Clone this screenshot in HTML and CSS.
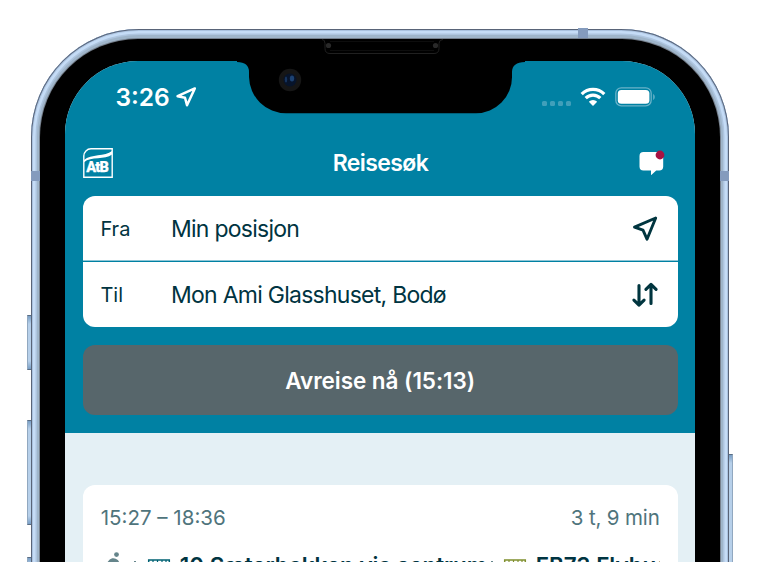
FILE: index.html
```html
<!DOCTYPE html>
<html lang="no">
<head>
<meta charset="utf-8">
<title>Reisesøk</title>
<link rel="stylesheet" href="styles.css">
</head>
<body>
<div class="stage">
  <i class="button mute"></i><i class="button vol-up"></i><i class="button vol-down"></i><i class="button power"></i>
  <div class="phone">
    <i class="band band-top"></i><i class="band band-left"></i><i class="band band-right"></i>
    <div class="bezel">
      <div class="screen">
        <div class="top">
          <div class="status">
            <div class="clock"><span>3:26</span>
              <svg width="21" height="21" viewBox="0 0 21 21"><path d="M18.8 1.4 1.6 9.200l7.400 1.500 2 7.600z" fill="none" stroke="#fff" stroke-width="2.500" stroke-linejoin="round"/></svg>
            </div>
            <div class="signals">
              <span class="dots"><i></i><i></i><i></i><i></i></span>
              <svg class="wifi" width="26" height="20" viewBox="0 0 26 20"><g fill="none" stroke="#fff" stroke-width="3.200"><path d="M1.700 7.100a16 16 0 0 1 22.600 0"/><path d="M5.700 11.200a10.300 10.300 0 0 1 14.600 0"/></g><path d="M13 19 8.800 14.700a6 6 0 0 1 8.400 0z" fill="#fff"/></svg>
              <svg class="battery" width="41" height="20" viewBox="0 0 41 20"><rect x=".8" y=".8" width="35.4" height="18" rx="5.5" fill="none" stroke="#69b3c9" stroke-width="1.3"/><rect x="2.8" y="2.900" width="31.600" height="13.800" rx="3.500" fill="#fff"/><path d="M38.200 7c2 1 2 5 0 6z" fill="#69b3c9"/></svg>
            </div>
          </div>
          <header class="header">
            <div class="logo"><svg width="30" height="30" viewBox="0 0 30 30"><path d="M8 .8H29.200V29.200H.8V8A7.200 7.200 0 0 1 8 .8z" fill="none" stroke="#fff" stroke-width="1.400"/><path d="M1 12C8 5.500 22 9 29 3v3.600C22 12 8 8.500 1 14.200z" fill="#fff"/></svg><b>AtB</b></div>
            <h1>Reisesøk</h1>
            <svg class="chat" width="26" height="26" viewBox="0 0 26 26"><path d="M4.500 2h15.700a4 4 0 0 1 4 4v10.500a4 4 0 0 1-4 4h-3l-4.600 4.300c-.4.300-.6.200-.6-.3v-4H4.500a4 4 0 0 1-4-4V6a4 4 0 0 1 4-4z" fill="#fff"/><circle cx="21" cy="5" r="4.400" fill="#a71342"/></svg>
          </header>
          <div class="search">
            <div class="row"><label>Fra</label><span class="place from">Min posisjon</span>
              <svg width="28" height="28" viewBox="0 0 28 28"><path d="M24.700 3 3.500 12.200l8.500 3 4 9z" fill="none" stroke="#00353f" stroke-width="2.900" stroke-linejoin="round"/></svg></div>
            <div class="row"><label>Til</label><span class="place to">Mon Ami Glasshuset, Bodø</span>
              <svg width="28" height="28" viewBox="0 0 28 28"><path d="M8 4.500V24M2.900 19.200l5.100 5 5.100-5M20 22.500V3.500M14.900 8.400l5.100-5 5.100 5" fill="none" stroke="#00353f" stroke-width="3.100" stroke-linejoin="round" stroke-linecap="round"/></svg></div>
          </div>
          <button class="depart">Avreise nå (15:13)</button>
        </div>
        <main class="results">
          <article class="trip">
            <div class="times"><span class="range">15:27 – 18:36</span><span class="duration">3 t, 9 min</span></div>
            <div class="legs">
              <svg class="walk" width="20" height="26" viewBox="0 0 20 26"><circle cx="12.500" cy="2.600" r="2.400" fill="#65858b"/><path d="M5 16V11.500Q8.500 6 12.500 9.500l3 5M9 9.500v6l5 8M8 15l-3 9" fill="none" stroke="#65858b" stroke-width="4"/></svg>
              <i class="sep"></i>
              <svg class="bus" width="24" height="22" viewBox="0 0 24 22"><path d="M1.700 1h20.600v17H1.700z" fill="none" stroke="#006173" stroke-width="1.500"/><path d="M6 1v7M10.500 1v7M15 1v7M19 1v7M1 9h22" stroke="#006173" stroke-width="1.200"/></svg>
              <span class="line first">10 Sæterbakken via sentrum</span>
              <i class="sep late"></i>
              <svg class="bus" width="24" height="22" viewBox="0 0 24 22"><path d="M1.700 1h20.600v17H1.700z" fill="none" stroke="#80902f" stroke-width="1.500"/><path d="M6 1v7M10.500 1v7M15 1v7M19 1v7M1 9h22" stroke="#80902f" stroke-width="1.200"/></svg>
              <span class="line second">FB73 Flybuss</span>
            </div>
          </article>
        </main>
      </div>
      <svg class="notch" width="288" height="76" viewBox="0 0 288 76"><path d="M0 0H288V23Q275 23.300 275 33V38A36 36 0 0 1 239 74.200H49A37 37 0 0 1 12 38V33Q12 23 0 23z"/>
        <g fill="none" stroke="#202020"><path d="M85 .5q3 0 3 4v5q0 5 5 5h104q5 0 5-5v-5q0-4 4-4"/><path d="M93 2.500h104M93 11.500h104" stroke="#0d0d0d"/></g>
        <circle cx="91.500" cy="6.500" r="2.600" fill="#292929"/><circle cx="198.500" cy="6.500" r="2.600" fill="#292929"/>
        <circle cx="53" cy="41" r="11.200" fill="#161616"/><circle cx="53" cy="41" r="6.500" fill="#07142b"/><ellipse cx="55" cy="39.500" rx="2.200" ry="3" fill="#1d4272"/><ellipse cx="49" cy="40.500" rx="1.200" ry="3" fill="#17345d"/></svg>
    </div>
  </div>
</div>
</body>
</html>
```
FILE: styles.css
```css
* { box-sizing: border-box; }
body { margin: 0; background: #fff; font-family: Inter, "Liberation Sans", sans-serif; color: #003441; }
.stage { position: relative; width: 760px; height: 562px; overflow: hidden; padding: 29px 31px 0 31.400px; }
.phone {
  position: relative; height: 900px; padding: 9.500px 9px; border-radius: 108px;
  background: #9fb5ca;
  box-shadow: inset 0 0 0 1px #596478, inset 0 0 0 2px #aac2df, inset 0 0 0 4.500px #c5dcf6, inset 0 0 0 6px #aec5df;
}
.bezel { position: relative; height: 880px; padding: 22.500px 25px; background: #000; border-radius: 98px; box-shadow: 0 0 0 1px #77818e; }
.screen { height: 836px; border-radius: 73px; overflow: hidden; background: #e4f0f5; }
.notch { position: absolute; left: 196.300px; top: 0; }
.band { position: absolute; background: #849bbd; z-index: 1; }
.band-top { left: 546.600px; top: -1px; width: 10px; height: 10px; }
.band-left { left: 0; top: 142px; width: 9px; height: 10px; }
.band-right { right: 0; top: 142px; width: 9px; height: 10px; }
.button { position: absolute; border: 1px solid #5a6d83; border-left-color: #91a8c0; border-right-color: #91a8c0; background: linear-gradient(#789ec5, #b7d0ea 8px, #b7d0ea calc(100% - 8px), #789ec5); }
.mute { left: 27px; top: 315px; width: 7px; height: 55px; }
.vol-up { left: 27px; top: 420px; width: 7px; height: 105px; }
.vol-down { left: 27px; top: 557px; width: 7px; height: 105px; }
.power { left: 727px; top: 454px; width: 6px; height: 170px; }

.top { height: 372px; padding: 0 17.400px; background: #0081a3; }
.status { height: 72px; padding: 0 21.600px 0 32.600px; display: flex; align-items: center; justify-content: space-between; color: #fff; }
.clock { display: flex; align-items: center; gap: 6px; font-size: 24.500px; font-weight: 600; letter-spacing: 0; }
.signals { display: flex; align-items: center; }
.dots { display: flex; gap: 3px; margin: 12px 9px 0 0; }
.dots i { width: 5px; height: 5px; border-radius: 1.500px; background: #409fba; }
.wifi { margin-right: 9px; }
.header { height: 63px; display: flex; align-items: center; justify-content: space-between; padding: 0 12.600px 4px 0; }
.logo { position: relative; width: 30px; height: 30px; color: #fff; }
.logo svg { display: block; }
.logo b { position: absolute; left: 3.500px; bottom: 2px; font: 900 14.500px/16px Roboto, sans-serif; letter-spacing: -.7px; -webkit-text-stroke: .25px #fff; }
h1 { margin: 0 0 0 9px; color: #fff; font-size: 23px; line-height: 28px; font-weight: 600; letter-spacing: -.6px; }
.search { height: 131px; border-radius: 12px; background: #fff; display: flex; flex-direction: column; }
.row { flex: 1; display: flex; align-items: center; padding: 0 18.600px 0 17.600px; }
.row + .row { border-top: 1px solid #0081a3; box-shadow: 0 -1px #8fc6d6; }
.row label { width: 70.600px; font-size: 20px; }
.row svg { margin-left: auto; }
.place { font-size: 23px; letter-spacing: -.74px; }
.depart { display: block; width: 100%; height: 70px; margin-top: 18px; border: 0; border-radius: 12px; background: #57666b; color: #fff; font: 600 22.500px Inter, sans-serif; letter-spacing: -.05px; }
.results { padding: 52px 17.400px; }
.trip { height: 300px; border-radius: 12px; background: #fff; padding: 20px 18px; }
.times { display: flex; justify-content: space-between; font-size: 20.500px; line-height: 26px; color: #4f747c; }
.duration { letter-spacing: -.15px; }
.legs { height: 30px; margin-top: 20px; display: flex; align-items: flex-start; overflow: hidden; white-space: nowrap; padding-top: 1px; }
.walk { flex: none; margin: 0 0 0 3px; }
.sep { flex: none; width: 2px; height: 2px; margin: 9px 11px 0 10px; background: #65858b; }
.sep.late { margin: 9px 10px 0 4px; }
.bus { flex: none; margin-top: 7px; }
.line { font-size: 22.400px; line-height: 28px; font-weight: 600; margin-left: 9px; }
```
